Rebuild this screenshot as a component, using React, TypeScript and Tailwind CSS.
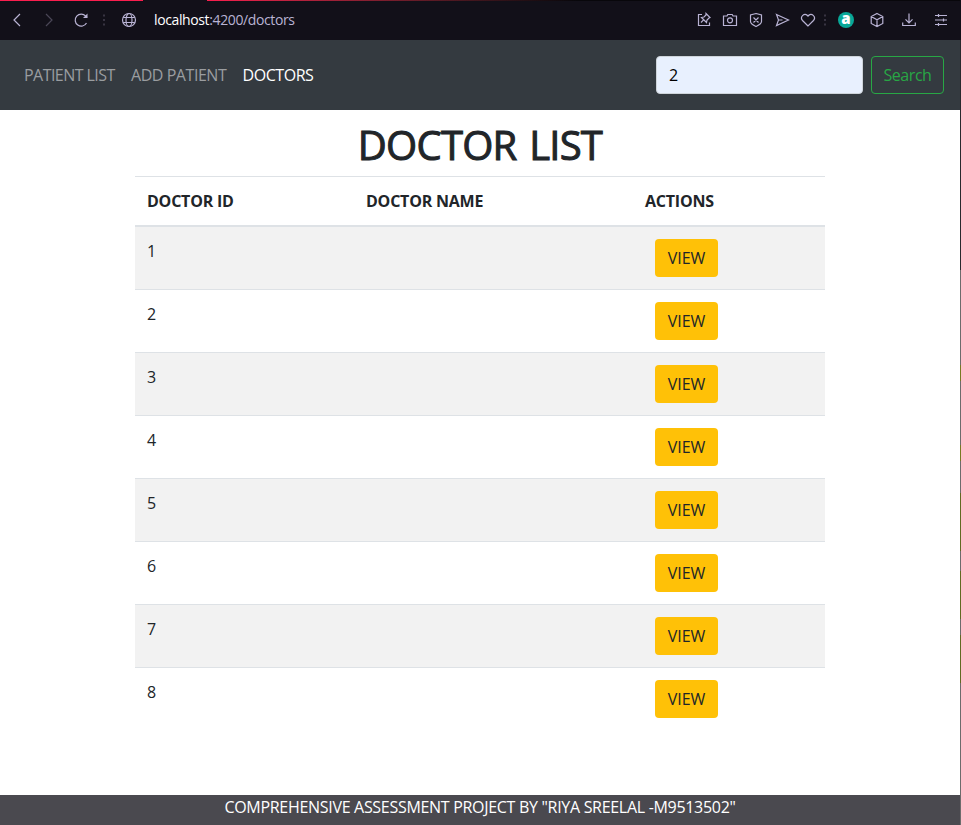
import React from 'react';

const ids = [1, 2, 3, 4, 5, 6, 7, 8];

function Icon({ w, className, children }: { w: number; className?: string; children: React.ReactNode }) {
  return (
    <svg width={w} height={16} viewBox={`0 0 ${w} 16`} fill="none" stroke="currentColor" strokeWidth={1.2} className={`shrink-0 ${className ?? ''}`}>
      {children}
    </svg>
  );
}

function BrowserBar() {
  return (
    <div className="h-10 bg-[#121019] text-[#b9b3d4]">
      <div className="flex h-px">
        <div className="w-[143px] bg-[#fa1e4e]" />
        <div className="w-16" />
        <div className="w-[370px] bg-linear-to-r from-[#fa1e4e] to-[#08070b]" />
        <div className="grow bg-[#08070b]" />
      </div>
      <div className="flex h-[38px] items-center">
        <Icon w={8} className="ml-[13px]"><path d="M7 2 1 8l6 6" /></Icon>
        <Icon w={8} className="ml-[24px] text-[#4b4757]"><path d="m1 2 6 6-6 6" /></Icon>
        <Icon w={16} className="ml-[20px]"><path d="M13.5 11A6 6 0 1 1 12.700 4.200L14 5.500" /><path d="M14.500 1.500V6H10z" fill="currentColor" stroke="none" /></Icon>
        <Icon w={2} className="ml-[14px] text-[#383442]"><path d="M1 2.500v2M1 7v2M1 11.500v2" strokeWidth={2} /></Icon>
        <Icon w={16} className="ml-4">
          <circle cx="8" cy="8" r="6.5" /><ellipse cx="8" cy="8" rx="3" ry="6.5" /><path d="M2.200 5.500h11.600M2.200 10.500h11.600" />
        </Icon>
        <span className="ml-[17px] w-[543px] whitespace-nowrap text-sm tracking-[-0.38px]"><span className="text-white">localhost</span>:4200/doctors</span>
        <Icon w={14}><path d="M5 2.500H1.500v11h11V10.500M4 10.500 6.300 8.200M9 1.500l4 4-1 .5-2 2-.5 2.500-5-5 2.500-.5 2-2z" /></Icon>
        <Icon w={16} className="ml-[11px]"><path d="M1.500 4H5l.8-1.500h4.400L11 4h3.500v9.500h-13z" /><circle cx="8" cy="8.300" r="2.500" /></Icon>
        <Icon w={14} className="ml-[11px]"><path d="M7 1.500 12.500 3v6.500C12.500 12 9 13.500 7 14.500 5 13.500 1.500 12 1.500 9.500V3zM4.500 5.500l5 5M9.500 5.500l-5 5" /></Icon>
        <Icon w={16} className="ml-[11px]"><path d="M2.500 2.500 14.500 8l-12 5.500L4.500 8zM4.500 8h4" /></Icon>
        <Icon w={16} className="ml-[10px]"><path d="M8 14 2.500 8.500C-.5 5 4.500-.3 8 4c3.500-4.300 8.500 1 5.500 4.500z" /></Icon>
        <Icon w={2} className="ml-2 text-[#383442]"><path d="M1 2.500v2M1 7v2M1 11.500v2" strokeWidth={2} /></Icon>
        <span className="ml-3 flex size-4 shrink-0 items-center justify-center rounded-full bg-[#08a898] pb-[3px] text-[15px] leading-none font-extrabold text-white">a</span>
        <Icon w={14} className="ml-[16px]"><path d="m7 1.500 5.800 3v7L7 14.500l-5.800-3v-7zM1.200 4.500 7 7.800l5.800-3.300M7 7.800v6.700" /></Icon>
        <Icon w={14} className="ml-[18px]"><path d="M7 1.500v9M3.500 7.300 7 10.800l3.500-3.500M.7 10.500v3h12.600v-3" /></Icon>
        <Icon w={14} className="ml-[18px]"><path d="M1 3.500h12M1 8h12M1 12.500h12M4.500 2v3M9.500 6.500v3M4.500 11v3" /></Icon>
      </div>
    </div>
  );
}

function Navbar() {
  return (
    <nav className="flex h-[70px] items-center bg-[#343a40] pl-6 pr-4 whitespace-nowrap text-[#9a9da0]">
      <a className="w-[107px] tracking-[-0.55px]">PATIENT LIST</a>
      <a className="w-[111.5px] tracking-[-0.45px]">ADD PATIENT</a>
      <a className="tracking-[-0.45px] text-white">DOCTORS</a>
      <input readOnly value="2" className="ml-auto h-[38px] w-[207px] rounded border border-[#ced4da] bg-[#e8f0fe] px-3 text-black outline-none" />
      <button className="ml-2 h-[38px] w-[73px] rounded border border-[#28a745] tracking-[-0.45px] text-[#28a745]">Search</button>
    </nav>
  );
}

export default function App() {
  return (
    <div className="flex h-[825px] w-[961px] bg-white font-['Segoe_UI','Open_Sans',sans-serif] text-base leading-6 text-[#212529]">
      <div className="flex w-[960px] flex-col">
        <BrowserBar />
        <Navbar />
        <main className="mx-auto w-[690px] grow">
          <h1 className="h-[66px] pt-[11px] text-center text-[40px] leading-[48px] font-medium whitespace-nowrap tracking-[-0.75px] [word-spacing:3px] [-webkit-text-stroke:1px_#212529]">DOCTOR LIST</h1>
          <div className="grid h-[51px] grid-cols-[219px_279px_192px] border-t border-b-2 border-[#dee2e6] pt-3 font-bold tracking-[-0.22px]">
            <span className="pl-3">DOCTOR ID</span><span className="pl-3">DOCTOR NAME</span><span className="pl-3">ACTIONS</span>
          </div>
          <div>
            {ids.map((id) => (
              <div key={id} className="grid h-[63px] grid-cols-[219px_279px_192px] border-t border-[#dee2e6] pt-3 first:h-[62px] first:border-t-0 odd:bg-[#f2f2f2]">
                <span className="pl-3 tracking-[-0.3px]">{id}</span><span />
                <button className="ml-[22px] h-[38px] w-[63px] rounded bg-[#ffc107] tracking-[-0.05px]">VIEW</button>
              </div>
            ))}
          </div>
        </main>
        <footer className="h-[30px] bg-[#4a494f] text-center whitespace-nowrap tracking-[-0.3px] text-white">COMPREHENSIVE ASSESSMENT PROJECT BY "RIYA SREELAL -M9513502"</footer>
      </div>
      <div className="flex w-px flex-col bg-[#6c6c6c]">
        <div className="h-10 bg-[#121019]" />
        <div className="h-[230px] bg-[#29292d]" />
        <div className="mt-[95px] h-4 bg-[#777a22]" />
        <div className="mt-16 h-4 bg-[#777a22]" />
        <div className="mt-8 h-[58px] bg-[#626a22]" />
        <div className="mt-5 h-12 bg-[#626a22]" />
        <div className="mt-4 h-12 bg-[#626a22]" />
      </div>
    </div>
  );
}
